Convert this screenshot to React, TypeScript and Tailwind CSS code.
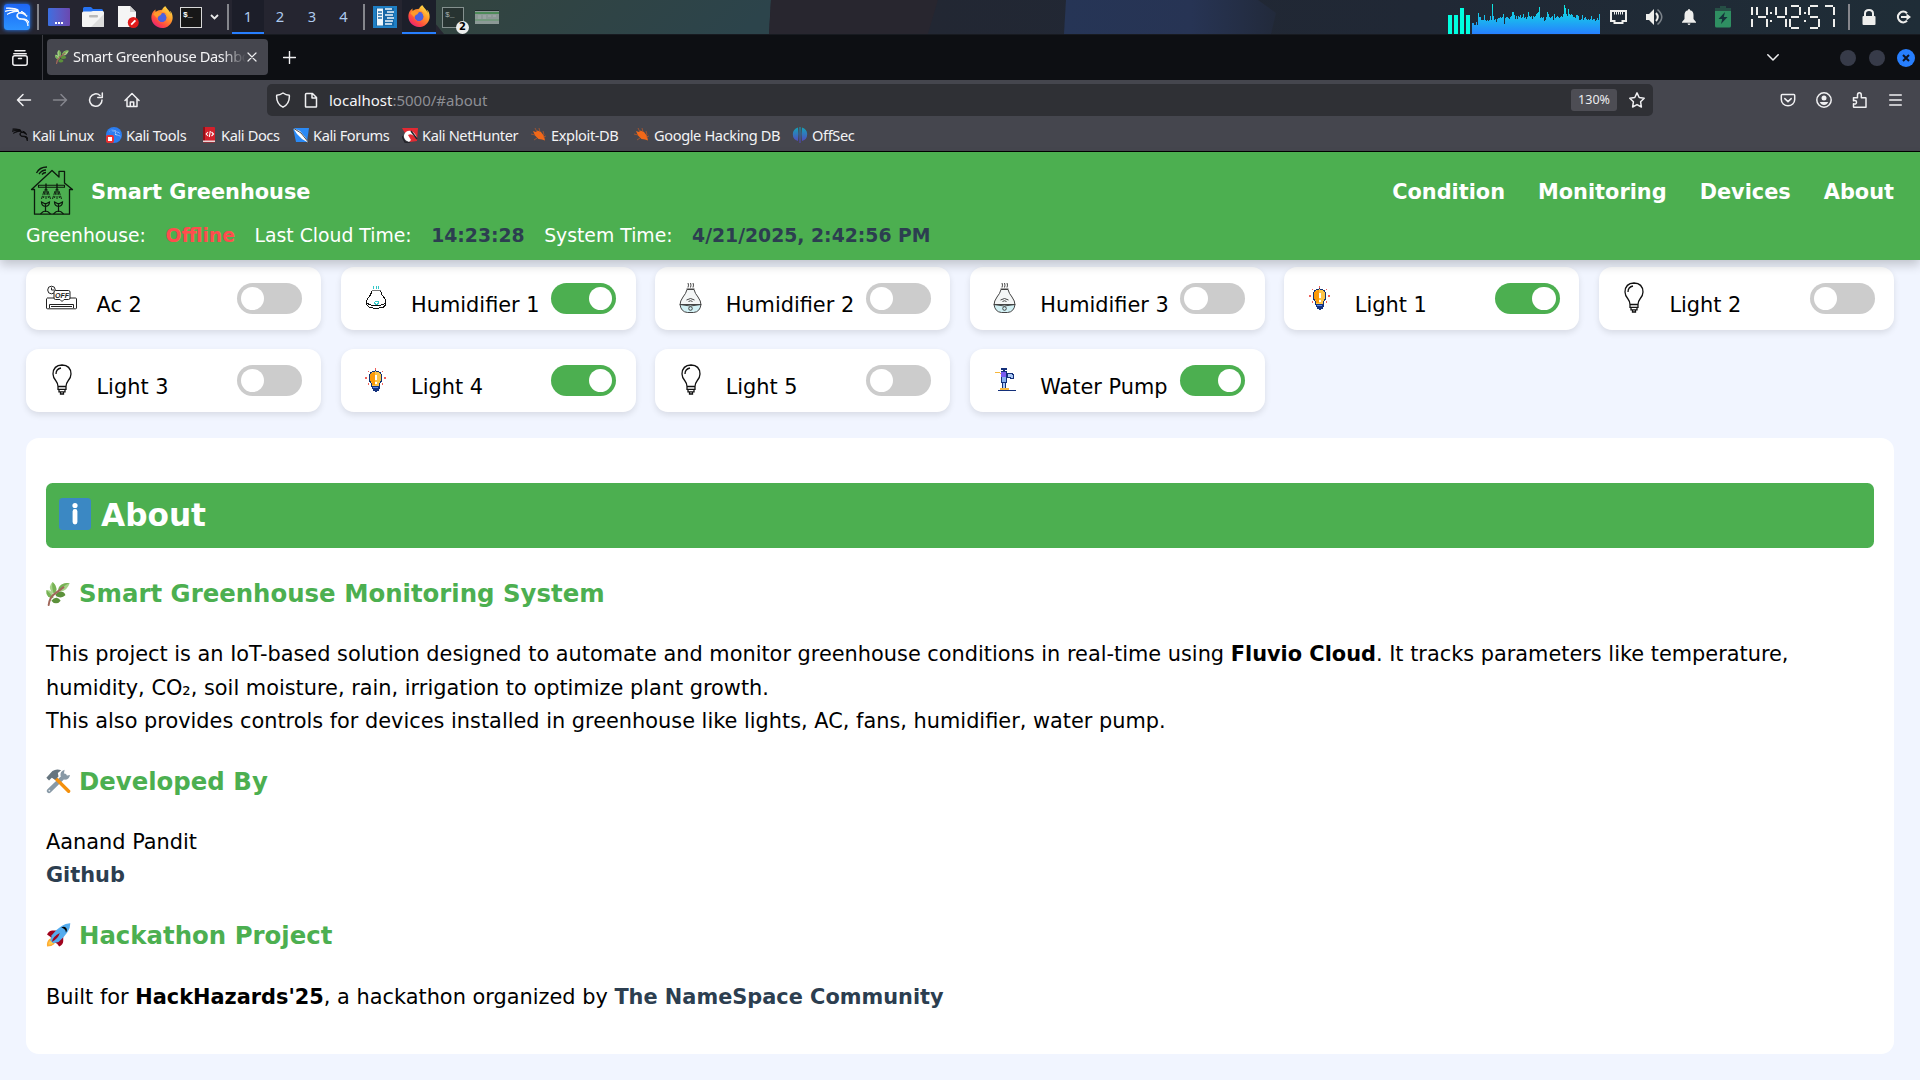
import React from "react";
import { SiKalilinux, SiFirefoxbrowser } from "react-icons/si";

type Kids = { children?: React.ReactNode };

/* ---------- desktop panel ---------- */

const Sep = ({ className = "" }: { className?: string }) => (
  <div className={`h-[26px] w-[2px] shrink-0 bg-[#85868c] ${className}`} />
);

const Firefox = () => (
  <div className="relative h-[22px] w-[22px]">
    <svg viewBox="0 0 24 24" className="absolute inset-0 h-full w-full">
      <defs>
        <linearGradient id="ffx" x1="0.85" y1="0.05" x2="0.2" y2="0.95">
          <stop offset="0" stopColor="#ffe14a" />
          <stop offset="0.4" stopColor="#ff9a2b" />
          <stop offset="0.75" stopColor="#ff4a3f" />
          <stop offset="1" stopColor="#e8217c" />
        </linearGradient>
      </defs>
      <circle cx="12" cy="13" r="9" fill="#ff8a2a" />
      <circle cx="12.3" cy="12.8" r="5.2" fill="#5a55d8" />
    </svg>
    <SiFirefoxbrowser className="absolute inset-0 h-full w-full" style={{ fill: "url(#ffx)" }} />
    <svg viewBox="0 0 24 24" className="absolute inset-0 h-full w-full">
      <circle cx="12.4" cy="12.6" r="4.2" fill="#4b62e0" />
      <path d="M2.5 9l3-3 3 1.2L12 8l-2 2.3-2.2.6-1 2.5z" fill="#ff9a2b" />
    </svg>
  </div>
);

const load = [
  11, 11, 9, 9, 12, 9, 21, 17, 17, 14, 14, 14, 19, 14, 13, 14, 13, 14, 18, 14, 30, 18, 14, 15, 12, 15, 16, 16, 17, 16, 17, 20,
  10, 16, 17, 17, 16, 15, 17, 18, 22, 22, 19, 15, 18, 15, 18, 17, 19, 16, 17, 20, 16, 17, 15, 17, 22, 18, 17, 18, 15, 18, 17, 18,
  20, 21, 22, 27, 16, 17, 16, 17, 13, 14, 17, 22, 20, 17, 16, 17, 18, 14, 20, 16, 17, 18, 17, 16, 17, 18, 17, 20, 29, 26, 20, 18,
  25, 20, 19, 20, 19, 17, 17, 16, 19, 19, 18, 14, 14, 15, 19, 14, 16, 17, 15, 14, 15, 14, 15, 18, 14, 15, 15, 13, 14, 16, 14, 20,
];

/* a: top, b: upper right, c: lower right, d: bottom, e: lower left, f: upper left, g: middle */
const SEGMENTS: Record<string, string> = { "1": "bc", "2": "abged", "4": "fgbc", "5": "afgcd", "7": "abc" };

const Digit = ({ d }: { d: string }) => {
  const on = SEGMENTS[d];
  return (
    <div className={`relative h-6 shrink-0 ${d === "1" ? "w-[3px]" : "w-[12px]"}`}>
      {on.includes("a") && <i className="absolute top-0 right-[2px] h-[2px] w-[8px] bg-[#eeeeec]" />}
      {on.includes("b") && <i className="absolute top-[2px] right-0 h-[8px] w-[2px] bg-[#eeeeec]" />}
      {on.includes("c") && <i className="absolute top-[14px] right-0 h-[8px] w-[2px] bg-[#eeeeec]" />}
      {on.includes("d") && <i className="absolute right-[2px] bottom-0 h-[2px] w-[8px] bg-[#eeeeec]" />}
      {on.includes("e") && <i className="absolute top-[14px] left-0 h-[8px] w-[2px] bg-[#eeeeec]" />}
      {on.includes("f") && <i className="absolute top-[2px] left-0 h-[8px] w-[2px] bg-[#eeeeec]" />}
      {on.includes("g") && <i className="absolute top-[11px] right-[2px] h-[2px] w-[8px] bg-[#eeeeec]" />}
    </div>
  );
};

const LcdClock = ({ time }: { time: string }) => (
  <div className="flex w-[85px] items-center justify-between" role="img" aria-label={time}>
    {time.split("").map((c, i) =>
      c === ":" ? (
        <div key={i} className="flex h-6 w-[2px] flex-col justify-center gap-[6px]">
          <i className="h-[2px] w-[2px] bg-[#eeeeec]" />
          <i className="h-[2px] w-[2px] bg-[#eeeeec]" />
        </div>
      ) : (
        <Digit key={i} d={c} />
      ),
    )}
  </div>
);

const Panel = () => (
  <div className="relative flex h-[35px] shrink-0 items-center border-b border-[#171a20] bg-[#252530]">
    <svg className="absolute inset-0" width="1920" height="34" viewBox="0 0 1920 34">
      <defs>
        <linearGradient id="pg" x1="0" y1="0" x2="1" y2="0.1">
          <stop offset="0" stopColor="#33443f" />
          <stop offset="1" stopColor="#2c444b" />
        </linearGradient>
        <linearGradient id="pb" x1="0" x2="1">
          <stop offset="0" stopColor="#263556" />
          <stop offset="0.6" stopColor="#273454" />
          <stop offset="1" stopColor="#222a3b" />
        </linearGradient>
        <linearGradient id="pr" x1="0" x2="1">
          <stop offset="0" stopColor="#222733" />
          <stop offset="0.5" stopColor="#202835" />
          <stop offset="1" stopColor="#1f2d37" />
        </linearGradient>
      </defs>
      <path d="M436 0H771L769 34H444L430 17z" fill="url(#pg)" />
      <path d="M771 0H938L928 34H769z" fill="#28262f" />
      <path d="M938 0H1920V34H928z" fill="url(#pr)" />
      <path d="M1066 0H1258L1276 13L1271 34H1064z" fill="url(#pb)" />
    </svg>
    <div className="relative flex h-[34px] w-full items-center">
      <div className="ml-[4px] flex h-[26px] w-[26px] shrink-0 items-center justify-center rounded-[3px] bg-gradient-to-b from-[#1f66f5] to-[#2c92ff] shadow-[0_0_4px_#277fff]">
        <SiKalilinux className="h-[24px] w-[24px] stroke-white stroke-[0.9] text-white" />
      </div>
      <Sep className="ml-[7px]" />
      <div className="ml-[9px] flex h-[18px] w-[22px] items-end justify-center gap-px rounded-[1px] bg-gradient-to-r from-[#3a6fe0] to-[#6a48b0] pb-[2px]">
        <i className="h-[2px] w-[2px] bg-white" />
        <i className="h-[2px] w-[2px] bg-white" />
        <i className="h-[2px] w-[2px] bg-white" />
      </div>
      <svg className="ml-[12px] shrink-0" width="22" height="22" viewBox="0 0 22 22">
        <path d="M1 9V2.5Q1 1 2.5 1H9l2 2h8.500Q21 3 21 4.500V9z" fill="#2672f0" />
        <path d="M0 7Q0 5.500 1.500 5.500H9L11 5h9.500Q22 5 22 6.500V20q0 1-1 1H1q-1 0-1-1z" fill="#f4f4f4" />
        <path d="M22 8v12q0 1-1 1H9z" fill="#dcdcdc" />
        <rect x="7" y="9" width="9" height="2.500" rx="1" fill="#b9b9b9" />
      </svg>
      <svg className="ml-[14px] shrink-0" width="21" height="22" viewBox="0 0 21 22">
        <path d="M0 0h12l6 6v15H0z" fill="#f5f5f5" />
        <path d="M12 0l6 6h-6z" fill="#cfcfcf" />
        <circle cx="15.300" cy="16.500" r="5.500" fill="#e01b1b" />
        <path d="M13.200 18.600l4.200-4.200" stroke="#fff" strokeWidth="1.800" />
      </svg>
      <div className="ml-[12px]"><Firefox /></div>
      <div className="ml-[7px] h-[21px] w-[22px] border border-[#d8d8d8] bg-[#171717] pt-[3px] pl-[2px] font-['Liberation_Mono',monospace] text-[8px] leading-[8px] font-bold text-white">$_</div>
      <svg className="ml-[8px] shrink-0" width="9" height="6" viewBox="0 0 9 6"><path d="M1 1l3.500 3.500L8 1" fill="none" stroke="#e8e8e8" strokeWidth="1.800" /></svg>
      <Sep className="ml-[8px]" />
      <div className="ml-[3px] flex h-[34px] font-['Noto_Sans',sans-serif] text-[14.700px] text-[#aecbee]">
        <div className="flex w-[32px] items-center justify-center border-b-2 border-[#277fff] bg-[#1c1e29]">1</div>
        <div className="flex w-[32px] items-center justify-center pb-px">2</div>
        <div className="flex w-[32px] items-center justify-center pb-px">3</div>
        <div className="flex w-[31px] items-center justify-center pb-px">4</div>
      </div>
      <Sep className="ml-[4px]" />
      <svg className="ml-[8px] shrink-0" width="24" height="22" viewBox="0 0 24 22">
        <rect width="24" height="22" fill="#1f7fc4" />
        <path d="M3 2h18v18H3z" fill="#1767a6" />
        <path d="M4 2.500h6v17H4z" fill="#eef6fb" />
        <path d="M5 6h4M5 9h4M5 12h4" stroke="#1f6ca8" strokeWidth="1.300" />
        <path d="M12 3h7M14 6h7M12 9h8M14 12h7M12 15h8M12 18h7" stroke="#eef6fb" strokeWidth="1.600" />
      </svg>
      <div className="ml-[5px] flex h-[34px] w-[34px] items-center justify-center border-b-2 border-[#277fff] bg-[#1c1f2a]"><Firefox /></div>
      <div className="relative ml-[6px] h-[21px] w-[22px] border border-[#85918f] bg-[#273331] pt-[3px] pl-[2px] font-['Liberation_Mono',monospace] text-[8px] leading-[8px] text-[#a5afad]">
        $_
        <span className="absolute -right-[6px] -bottom-[7px] flex h-[13px] w-[13px] items-center justify-center rounded-full bg-[#eceeee] font-['DejaVu_Sans',sans-serif] text-[10px] leading-none font-bold text-black">2</span>
      </div>
      <svg className="ml-[11px] shrink-0" width="24" height="14" viewBox="0 0 24 14">
        <rect width="24" height="14" fill="#8c9996" />
        <rect width="24" height="1" fill="#1e2a2a" />
        <rect y="2" width="24" height="2" fill="#4d8a58" />
        <path d="M3 6h3M8 6h3M13 6h3M18 6h3M3 8h3M8 8h3" stroke="#a5aeac" />
        <rect y="9.500" width="24" height="1" fill="#5d9767" />
      </svg>
      <svg className="ml-auto shrink-0" width="152" height="34" viewBox="0 0 152 34">
        <defs>
          <linearGradient id="cpu" x1="0" y1="6" x2="0" y2="34" gradientUnits="userSpaceOnUse">
            <stop offset="0" stopColor="#0fe8e0" />
            <stop offset="1" stopColor="#277fff" />
          </linearGradient>
        </defs>
        <path d="M0 15h4v19H0zM6 15h4v19H6zM12 8h4v26h-4zM18 15h4v19h-4z" fill="#00ffe0" />
        {load.map((h, i) => (
          <rect key={i} x={24 + i} y={34 - h} width="1" height={h} fill="url(#cpu)" shapeRendering="crispEdges" />
        ))}
      </svg>
      <svg className="ml-[10px] shrink-0" width="17" height="14" viewBox="0 0 17 14">
        <path d="M1 1h15v10h-3.500v2h-8v-2H1z" fill="none" stroke="#eeeeec" strokeWidth="2" />
        <path d="M4.500 2v2.500M6.500 2v2.500M8.500 2v2.500M10.500 2v2.500M12.500 2v2.500" stroke="#eeeeec" />
      </svg>
      <svg className="ml-[18px] shrink-0" width="19" height="18" viewBox="0 0 19 18">
        <path d="M1 6h3l5-5v16l-5-5H1z" fill="#eeeeec" />
        <path d="M11 5q3.500 4 0 8" fill="none" stroke="#eeeeec" strokeWidth="2" />
        <path d="M12.500 1.500q8.500 7.500 0 15" fill="none" stroke="#7c838a" strokeWidth="1.600" />
      </svg>
      <svg className="ml-[18px] shrink-0" width="14" height="16" viewBox="0 0 14 16">
        <path d="M7 0q1 0 1 1.200Q11.500 2 11.500 6v4L14 13v.7H0V13l2.500-3V6Q2.500 2 6 1.200 6 0 7 0zM5.500 14.500h3Q8 16 7 16t-1.500-1.500z" fill="#eeeeec" />
      </svg>
      <svg className="ml-[19px] shrink-0" width="16" height="22" viewBox="0 0 16 22">
        <path d="M5 0h6v2H5zM0 2h16v5H0z" fill="#264f45" />
        <path d="M0 5h16v15q0 1.500-1.500 1.500h-13Q0 21.500 0 20z" fill="#2f8f62" />
        <path d="M10 6l-6.500 7h3.700L6 18l6.500-7H8.800z" fill="#15323a" />
      </svg>
      <div className="ml-[19px]"><LcdClock time="14:42:57" /></div>
      <Sep className="ml-[13px]" />
      <svg className="ml-[12px] shrink-0" width="14" height="16" viewBox="0 0 14 16">
        <path d="M3 8V4.500Q3 1 7 1t4 3.500V8" fill="none" stroke="#eeeeec" strokeWidth="2" />
        <rect x="0.500" y="7" width="13" height="9" rx="1" fill="#eeeeec" />
      </svg>
      <svg className="mr-[9px] ml-[20px] shrink-0" width="15" height="14" viewBox="0 0 15 14">
        <path d="M11 3.200A5.300 5.300 0 1 0 11 10.800" fill="none" stroke="#eeeeec" strokeWidth="2.200" />
        <path d="M5 6h5.500V3.500L15 7l-4.500 3.500V8H5z" fill="#eeeeec" />
      </svg>
    </div>
  </div>
);

/* ---------- emoji drawings ---------- */

const Herb = ({ className }: { className: string }) => (
  <svg viewBox="0 0 36 36" className={className}>
    <path d="M10 0Q3 6 8 15q1.500 2 4 2 5-3 3-9-1-5-5-8z" fill="#a6d388" />
    <path d="M10 0q-2 8 1.500 17 5-2 4-8-1-5-5.500-9z" fill="#77b255" />
    <path d="M35.500 2Q29 0 23 4q-5 4-4 10 7 1 11-3t5.500-9z" fill="#a6d388" />
    <path d="M35.500 2Q28 4 19 14q-2-6 4-10 6-4 12.500-2z" fill="#77b255" />
    <path d="M.8 12Q-.5 18 3 21.500T11 24q1-5-2-8.500T.8 12z" fill="#a6d388" />
    <path d="M.8 12Q6 16 11 24q-5 .5-8-2.500T.8 12z" fill="#77b255" />
    <path d="M14 19q5-6 10-4.500t5 5.500q-4 4-9 3t-6-4z" fill="#5c913b" />
    <path d="M8 28q4-5 8-4.500t6 4.500q-3 4-7 4t-7-4z" fill="#5c913b" />
    <path d="M4 34.500q1-10 8-16L26 8" fill="none" stroke="#a0675a" strokeWidth="3" strokeLinecap="round" />
  </svg>
);

const Tools = () => (
  <svg viewBox="0 0 36 36" className="h-[24.300px] w-[25px]">
    <path d="M4 32.500L27 10" stroke="#8899a6" strokeWidth="6.500" strokeLinecap="round" />
    <path d="M21 10q-1-7 6-9l-1 6 3 3 6-1q-1 7-8 7z" fill="#8899a6" />
    <circle cx="4.500" cy="32" r="1.300" fill="#e1e8ed" />
    <path d="M12 12l21 21" stroke="#f4900c" strokeWidth="5" strokeLinecap="round" />
    <path d="M0 13L9 3q6-4 13-1l-5 4 1 5-5 5-5-3-4 4z" fill="#66757f" />
  </svg>
);

const Rocket = () => (
  <svg viewBox="0 0 36 36" className="h-[24.300px] w-[25px]">
    <path d="M1 17q3-6 8-6l9 0-10 14q-2-6-7-8zM19 35q6-3 6-8V18L11 28q6 2 8 7z" fill="#a0041e" />
    <path d="M1 35q-1-7 3-11 4-3 7 0t1 7q-4 4-11 4z" fill="#ffac33" />
    <path d="M3 32q0-4 2-5t4 1 0 3q-2 1-6 1z" fill="#ffcc4d" />
    <path d="M35.500.5Q23 0 8 18l-2 8 4 4 8-2Q36 13 35.500.500z" fill="#55acee" />
    <path d="M22 7q4-3 7 0t0 7q0-3-2.500-5T22 7z" fill="#000" />
    <path d="M8 28q2-8 12-13-3 9-12 13z" fill="#a0041e" />
  </svg>
);

/* ---------- browser chrome ---------- */

const stroke = { fill: "none", stroke: "#f0f0f2", strokeWidth: 1.5, strokeLinecap: "round" as const, strokeLinejoin: "round" as const };

const Ico = ({ d, className = "", color = "#f0f0f2" }: { d: string; className?: string; color?: string }) => (
  <svg width="16" height="16" viewBox="0 0 16 16" className={`shrink-0 ${className}`}>
    <path d={d} {...stroke} stroke={color} />
  </svg>
);

const TabStrip = () => (
  <div className="flex h-[45px] shrink-0 items-center bg-[#0d0f13]">
    <svg width="16" height="16" viewBox="0 0 16 16" className="ml-[12px]">
      <path d="M3 .8h10M1.800 3.800h12.400" {...stroke} />
      <rect x="0.800" y="5.800" width="14.400" height="9.400" rx="2" {...stroke} />
      <path d="M6.500 8.500h3" {...stroke} />
    </svg>
    <div className="ml-[14px] h-full w-px bg-[#3b3c42]" />
    <div className="mb-px ml-[4px] flex h-[36px] w-[221px] items-center rounded-[4px] bg-[#45464e] pl-[8px]">
      <Herb className="h-[14px] w-[14px] shrink-0" />
      <span className="ml-[4px] w-[173px] text-[14.600px] tracking-[-0.350px] whitespace-nowrap text-[#f3f3f5] [mask-image:linear-gradient(to_right,#000_86%,transparent_100%)]">Smart Greenhouse Dashbo</span>
      <svg width="10" height="10" viewBox="0 0 10 10" className="ml-[1px] shrink-0"><path d="M1 1l8 8M9 1L1 9" {...stroke} strokeWidth="1.200" /></svg>
    </div>
    <svg width="13" height="13" viewBox="0 0 13 13" className="ml-[15px]"><path d="M6.500.5v12M.5 6.500h12" {...stroke} strokeWidth="1.400" /></svg>
    <svg width="12" height="7" viewBox="0 0 12 7" className="ml-auto"><path d="M.8.8L6 6l5.200-5.200" {...stroke} /></svg>
    <i className="ml-[61px] h-4 w-4 rounded-full bg-[#373b49]" />
    <i className="ml-[13px] h-4 w-4 rounded-full bg-[#373b49]" />
    <div className="mr-[5px] ml-[12px] flex h-[18px] w-[18px] items-center justify-center rounded-full bg-[#277fff]">
      <svg width="8" height="8" viewBox="0 0 8 8"><path d="M1 1l6 6M7 1L1 7" stroke="#0d1424" strokeWidth="2" /></svg>
    </div>
  </div>
);

const NavBar = () => (
  <div className="flex h-[40px] shrink-0 items-center">
    <Ico className="ml-[16px]" d="M14.500 8H1.500M7 2.500L1.500 8 7 13.500" />
    <Ico className="ml-[20px]" color="#85868d" d="M1.500 8h13M9 2.500L14.500 8 9 13.500" />
    <Ico className="ml-[20px]" d="M14 8a6.200 6.200 0 1 1-2-4.500M14.300 1v4.500H9.800" />
    <Ico className="ml-[20px]" d="M1 8.500L8 1.500l7 7M3 7v7.500h10V7M6.300 14.500V10h3.400v4.500" />
    <div className="ml-[127px] flex h-[32px] w-[1386px] items-center rounded-[5px] bg-[#2f3035]">
      <Ico className="ml-[8px]" d="M8 1q3 2.200 6.300 2.200Q15 11.500 8 15.200 1 11.500 1.700 3.200 5 3.200 8 1z" />
      <Ico className="ml-[12px]" d="M3.500 1.500h6l4 4v9q0 .5-.5.5H3q-.5 0-.5-.5v-12q0-1 1-1zM9 1.500V6h4.500" />
      <span className="ml-[10px] text-[15px] text-[#8d8e94]"><span className="text-[#f5f5f7]">localhost</span>:5000/#about</span>
      <div className="ml-auto flex h-[22px] w-[46px] items-center justify-center rounded-[3px] bg-[#4d4d54] text-[12.500px] text-[#ececee]">130%</div>
      <Ico className="mr-[8px] ml-[12px]" d="M8 .9l2.200 4.600 5 .7-3.600 3.600.8 5.200L8 12.600 3.600 15l.8-5.200L.8 6.200l5-.7z" />
    </div>
    <Ico className="ml-auto" d="M2.200 2.500h11.600q.9 0 .9.900v4.200a6.700 6.200 0 0 1-13.400 0V3.400q0-.9.900-.9zM4.800 6.600L8 9.600l3.200-3" />
    <svg width="16" height="16" viewBox="0 0 16 16" className="ml-[20px] shrink-0">
      <circle cx="8" cy="8" r="7.200" {...stroke} />
      <circle cx="8" cy="6" r="2.500" fill="#f0f0f2" />
      <path d="M3.800 10h8.400q-1.200 2.900-4.200 2.900T3.800 10z" fill="#f0f0f2" />
    </svg>
    <Ico className="ml-[20px]" d="M2 15.200q-.5 0-.5-.5V11.800q3 .8 3-1.500t-3-1.500V5.700h4V3.200q0-2.400 1.900-2.400t1.900 2.400v2.500h4.200q.5 0 .5.500v9z" />
    <svg width="13" height="12" viewBox="0 0 13 12" className="mr-[18px] ml-[21px] shrink-0"><path d="M.7 1h11.600M.7 6h11.600M.7 11h11.600" {...stroke} /></svg>
  </div>
);

const Bug = () => (
  <svg width="16" height="16" viewBox="0 0 16 16">
    <path d="M2 4l3 1 1.500-1.500L10 5l3 4 1 4.500-3-1-3.500-.5L4 8.500z" fill="#f26818" />
    <path d="M0 7l4 1M3 13l3-2M8 1l1 4M12 4l1 4M4 1l2 4M15 9l-3 1" stroke="#b5582a" strokeWidth="0.800" />
  </svg>
);

const bookmarks: { label: string; width: string; icon: React.ReactNode }[] = [
  { label: "Kali Linux", width: "w-[94px]", icon: <SiKalilinux className="h-4 w-4 stroke-[#0b0b0c] stroke-[1.2] text-[#0b0b0c]" /> },
  {
    label: "Kali Tools", width: "w-[95px]",
    icon: (
      <span className="relative block h-4 w-4 rounded-full bg-[#2b7df0]">
        <SiKalilinux className="absolute top-px left-[3px] h-3 w-3 text-white" />
        <i className="absolute bottom-0 left-0 h-[8px] w-[8px] rounded-[2px] border-2 border-[#ea3030] bg-white" />
      </span>
    ),
  },
  {
    label: "Kali Docs", width: "w-[92px]",
    icon: (
      <svg width="16" height="16" viewBox="0 0 16 16">
        <rect x="2" y="0" width="12" height="15.500" rx="1" fill="#d3202b" />
        <path d="M2 0h2v15H2z" fill="#8f1119" />
        <path d="M2 13.500h12v1.500H2z" fill="#e9d7d8" />
        <path d="M7 5L5.200 7 7 9M10.500 5l2 2-2 2M9.300 4l-1 6" stroke="#fff" fill="none" strokeWidth="1.100" />
      </svg>
    ),
  },
  {
    label: "Kali Forums", width: "w-[109px]",
    icon: (
      <svg width="16" height="16" viewBox="0 0 16 16">
        <path d="M0 1h16l-2 14H3z" fill="#2b8af5" />
        <path d="M0 1l7 3 5 6 4 6-7-4-5-5z" fill="#fff" />
        <path d="M0 1l8 5 8 10" stroke="#222" fill="none" strokeWidth="0.800" />
      </svg>
    ),
  },
  {
    label: "Kali NetHunter", width: "w-[129px]",
    icon: (
      <svg width="16" height="16" viewBox="0 0 16 16">
        <path d="M0 1h16l-1 13-7 1z" fill="#e22a33" />
        <path d="M2 8q2-5 7-4 5 2 6 8l-3-3q-3-3-6-1l3 5-2 2Q1 13 2 8z" fill="#fff" />
        <path d="M0 9l3 6 5 1M9 4l6 8" stroke="#24242a" strokeWidth="1.500" fill="none" />
      </svg>
    ),
  },
  { label: "Exploit-DB", width: "w-[103px]", icon: <Bug /> },
  { label: "Google Hacking DB", width: "w-[158px]", icon: <Bug /> },
  {
    label: "OffSec", width: "w-[70px]",
    icon: (
      <svg width="16" height="16" viewBox="0 0 16 16">
        <defs><linearGradient id="os" x1="0" x2="0" y1="0" y2="1"><stop offset="0" stopColor="#12a5b8" /><stop offset="1" stopColor="#5a3fc0" /></linearGradient></defs>
        <path d="M6 .5q1 7 0 13.500Q.8 12.500.8 7 1 2 6 .5zM10 .5q-1 7 0 13.500Q15.200 12.500 15.200 7 15 2 10 .5zM7.500 0h1v16h-1z" fill="url(#os)" />
      </svg>
    ),
  },
];

const Bookmarks = () => (
  <div className="flex h-[31px] shrink-0 items-center pl-[12px] text-[14.600px] tracking-[-0.380px] text-[#f3f3f5]">
    {bookmarks.map((b) => (
      <div key={b.label} className={`flex shrink-0 items-center gap-[4px] whitespace-nowrap ${b.width}`}>
        <span className="h-4 w-4 shrink-0">{b.icon}</span>
        {b.label}
      </div>
    ))}
  </div>
);

/* ---------- greenhouse page ---------- */

const GreenhouseLogo = () => (
  <svg width="52" height="52" viewBox="0 0 52 52" fill="none" stroke="#0c1a0d" strokeWidth="1.300">
    <path d="M5.500 24.500L26 5.500l7 6.500V6.300h5.500V18l8 6.500h-3v24.700H8.500V24.500z" strokeLinejoin="round" />
    <path d="M10.500 8q3-6 10.500-6M13 9q3-4 7-4M16 9.500q1.500-2 4-2" />
    <path d="M12.500 20.300h26v2h-26z" strokeWidth="1.100" />
    <path d="M20 18.500v6M31 18.500v6M18.500 25h3M29.500 25h3" strokeWidth="1.400" />
    <path d="M18 26l-2.500 8M19 26l-1.500 7M21 26l1.500 7M22 26l2.500 8M20 26v8M29 26l-2.500 8M30 26l-1.500 7M32 26l1.500 7M33 26l2.500 8M31 26v8" strokeWidth="0.900" strokeDasharray="4 1" />
    <path d="M19.500 38v9M15.500 37q0 4 4 4.500 4-.5 4-4.500l-4 2zM32.500 38v9M28.500 37q0 4 4 4.500 4-.5 4-4.500l-4 2zM14.500 49q5-6 10 0M27.500 49q5-6 10 0" strokeWidth="1.200" />
  </svg>
);

const Bulb = () => (
  <svg width="31" height="31" viewBox="0 0 31 31" fill="none" stroke="#111" strokeWidth="1.300">
    <path d="M12 22.500q0-3-2-5.500-3-3.500-3-7Q7.300 1.200 16 1 24.700 1.200 25 10q0 3.500-3 7-2 2.500-2 5.500zM12 22.500h8v2.800h-8zM13 25.300h6v2.500h-6zM14.500 28v2h3v-2" />
    <path d="M10 10q0-5 5-6" />
  </svg>
);

const BulbOn = () => (
  <svg width="31" height="31" viewBox="0 0 31 31" shapeRendering="crispEdges">
    <path d="M15.500 4v2M8 7l1.500 1.500M23 7l-1.500 1.500M5 14h2M24 14h2M8 20.500l1-1M23 20.500l-1-1" stroke="#f0625c" strokeWidth="1.200" />
    <path d="M15.500 7q6.500.5 6.500 7 0 3-2.500 5.500V22h-8v-2.500Q9 17 9 14q0-6.500 6.500-7z" fill="#fdc448" stroke="#123274" />
    <path d="M15 8q-5.500.5-5.500 6 0 3 2.500 5v2h3z" fill="#fb9a09" />
    <path d="M15 11h2v5h-2zM15 18h2v2h-2z" fill="#fff" />
    <path d="M12 22h8v3h-1v2h-2v1h-2v-1h-2v-2h-1z" fill="#14327e" />
    <path d="M13 23.500h5" stroke="#5a86e8" />
  </svg>
);

const AcOff = () => (
  <svg width="31" height="31" viewBox="0 0 31 31" fill="none" stroke="#222" strokeWidth="1">
    <circle cx="5.500" cy="8" r="3.800" />
    <path d="M5.500 5.500V8H8M1 16h7.500M24 16h5.500q1 0 1 1v9q0 .8-1 .8h-28q-1 0-1-.800V16.500M3.500 26v-3.500h24V26M5 24.500h21" />
    <path d="M9.500 8.500h13q1.500 0 1.500 1.500v6q0 1.500-1.500 1.500H18l-2 2-2-2H9.500Q8 17.500 8 16v-6q0-1.500 1.500-1.500z" fill="#fff" />
    <text x="16" y="15.600" fontSize="7" fontWeight="bold" textAnchor="middle" fill="#222" stroke="none" fontFamily="Liberation Sans, sans-serif" fontStyle="italic">OFF</text>
  </svg>
);

const HumidOn = () => (
  <svg width="31" height="31" viewBox="0 0 31 31" fill="none" stroke="#111" strokeWidth="1" shapeRendering="crispEdges">
    <path d="M13.500 4v2.500M16 4v2.500M18.500 4v2.500" stroke="#35c8c8" />
    <path d="M12 8.500h8.500" stroke="#777" />
    <path d="M12 9q-1 4-3.500 6.500-2.500 3-2 5.500.5 5 7 5h5.500q6.500 0 7-5 .5-2.500-2-5.500-2.500-2.500-3.500-6.500M7 21.500q4 2 9 2t9.500-2" />
    <path d="M14.500 19.500h4M14.500 19.500v1.500h1v1h2v-1h1v-1.500" stroke="#35c8c8" />
  </svg>
);

const HumidOff = () => (
  <svg width="31" height="31" viewBox="0 0 31 31" fill="none" stroke="#444" strokeWidth="1">
    <path d="M13 1q1 2 0 4.500M15.500 1q1 2 0 4.500M18 1q1 2 0 4.500M11.500 7h8" />
    <path d="M12 7.500q-1 4-4 7.500-3 4-3 8h21q0-4-3-8-3-3.500-4-7.500z" fill="#f4f6f6" />
    <path d="M5 22.500h21q-1 7.500-7.500 8h-6q-6.500-.5-7.500-8z" fill="#d2f0f4" />
    <path d="M5 22.500q10 3 21 0M11.500 18q4-3 8 0M13.500 19.500q2-1.500 4 0" />
    <circle cx="15.500" cy="26.500" r="1.800" />
  </svg>
);

const Pump = () => (
  <svg width="31" height="31" viewBox="0 0 31 31" shapeRendering="crispEdges">
    <path d="M6 8.500h4.500L12 10" stroke="#f6b73c" fill="none" />
    <path d="M12 5h6M15 5v2" stroke="#14307a" strokeWidth="1.500" />
    <path d="M12.500 7.500h5v11h-5z" fill="#86b0ee" stroke="#14307a" />
    <path d="M18 9.500h5l1.500 1.500v3.500h-3V13H18z" fill="#aac8f4" stroke="#14307a" />
    <path d="M12 8h5v5h-5z" fill="#7a5cf0" />
    <path d="M13.500 18.500h3V24h-3z" fill="#aac8f4" stroke="#14307a" />
    <path d="M10.500 24h9v2h-9z" fill="#f6b73c" />
    <path d="M9 26.500h18" stroke="#14307a" strokeWidth="1.300" />
  </svg>
);

const devices: { name: string; on: boolean; icon: React.ReactNode }[] = [
  { name: "Ac 2", on: false, icon: <AcOff /> },
  { name: "Humidifier 1", on: true, icon: <HumidOn /> },
  { name: "Humidifier 2", on: false, icon: <HumidOff /> },
  { name: "Humidifier 3", on: false, icon: <HumidOff /> },
  { name: "Light 1", on: true, icon: <BulbOn /> },
  { name: "Light 2", on: false, icon: <Bulb /> },
  { name: "Light 3", on: false, icon: <Bulb /> },
  { name: "Light 4", on: true, icon: <BulbOn /> },
  { name: "Light 5", on: false, icon: <Bulb /> },
  { name: "Water Pump", on: true, icon: <Pump /> },
];

const Toggle = ({ on }: { on: boolean }) => (
  <div className={`flex h-[31px] w-[65px] items-center rounded-full px-[4px] ${on ? "justify-end bg-[#4caf50]" : "bg-[#cccccc]"}`}>
    <i className="h-[23.500px] w-[23.500px] rounded-full bg-white" />
  </div>
);

const H3 = ({ icon, children }: Kids & { icon: React.ReactNode }) => (
  <h3 className="flex h-[38px] items-center text-[24.400px] font-bold text-[#4caf50]">
    <span className="mr-[8px] w-[25px]">{icon}</span>
    {children}
  </h3>
);

export default function App() {
  return (
    <div className="flex h-[1080px] w-[1920px] flex-col overflow-hidden bg-[#f1f5ff] font-['Noto_Sans',sans-serif]">
      <Panel />
      <TabStrip />
      <div className="flex h-[72px] shrink-0 flex-col border-b border-black bg-[#45464e]">
        <NavBar />
        <Bookmarks />
      </div>

      <div className="flex flex-1 flex-col font-['DejaVu_Sans',sans-serif] text-[20.870px] leading-[33.500px] text-black">
        <header className="z-10 flex h-[108px] shrink-0 flex-col bg-[#4caf50] px-[26px] pt-[13px] text-white shadow-[0_5px_10px_rgba(0,0,0,0.2)]">
          <div className="flex h-[52px] items-center justify-between font-bold">
            <div className="flex items-center gap-[13px]">
              <GreenhouseLogo />
              <span className="pt-[4px]">Smart Greenhouse</span>
            </div>
            <nav className="flex gap-[33px] pt-[4px]">
              <a>Condition</a>
              <a>Monitoring</a>
              <a>Devices</a>
              <a>About</a>
            </nav>
          </div>
          <div className="mt-[2px] flex gap-[19.500px] text-[18.810px]">
            <span>Greenhouse:</span>
            <b className="text-[#ff4d4d]">Offline</b>
            <span>Last Cloud Time:</span>
            <b className="text-[#2c3e50]">14:23:28</b>
            <span>System Time:</span>
            <b className="text-[#2c3e50]">4/21/2025, 2:42:56 PM</b>
          </div>
        </header>

        <main className="flex flex-col px-[26px] pt-[7px]">
          <section className="grid grid-cols-6 gap-x-[19.500px] gap-y-[19px]">
            {devices.map((d) => (
              <div key={d.name} className="flex h-[63px] items-center rounded-[13px] bg-white px-[19.500px] shadow-[0_3px_6px_rgba(0,0,0,0.1)]">
                <span className="mb-[3px] h-[31px] w-[31px] shrink-0">{d.icon}</span>
                <span className="mt-[14px] ml-[20px] whitespace-nowrap">{d.name}</span>
                <div className="ml-auto shrink-0"><Toggle on={d.on} /></div>
              </div>
            ))}
          </section>

          <section className="mt-[26px] h-[616px] rounded-[13px] bg-white px-[20px] pt-[45px]">
            <h2 className="flex h-[65px] items-center rounded-[6.500px] bg-[#4caf50] pl-[13px] text-[31.200px] font-bold text-white">
              <svg width="32" height="32" viewBox="0 0 32 32" className="mb-[3px]">
                <rect width="32" height="32" rx="3.500" fill="#3b88c3" />
                <circle cx="16" cy="7.500" r="2.600" fill="#fff" />
                <rect x="13.600" y="11" width="4.800" height="15.500" rx="2.400" fill="#fff" />
              </svg>
              <span className="mt-px ml-[10px]">About</span>
            </h2>
            <div className="mt-[27px]"><H3 icon={<Herb className="h-[24px] w-[24px]" />}>Smart Greenhouse Monitoring System</H3></div>
            <p className="mt-[25px]">
              This project is an IoT-based solution designed to automate and monitor greenhouse conditions in real-time using <b>Fluvio Cloud</b>. It tracks parameters like temperature,
              <br />
              humidity, CO₂, soil moisture, rain, irrigation to optimize plant growth.
              <br />
              This also provides controls for devices installed in greenhouse like lights, AC, fans, humidifier, water pump.
            </p>
            <div className="mt-[24px]"><H3 icon={<Tools />}>Developed By</H3></div>
            <p className="mt-[25px]">
              Aanand Pandit
              <br />
              <b className="text-[#2c3e50]">Github</b>
            </p>
            <div className="mt-[24px]"><H3 icon={<Rocket />}>Hackathon Project</H3></div>
            <p className="mt-[26px]">
              Built for <b>HackHazards'25</b>, a hackathon organized by <b className="text-[#2c3e50]">The NameSpace Community</b>
            </p>
          </section>
        </main>
      </div>
    </div>
  );
}
